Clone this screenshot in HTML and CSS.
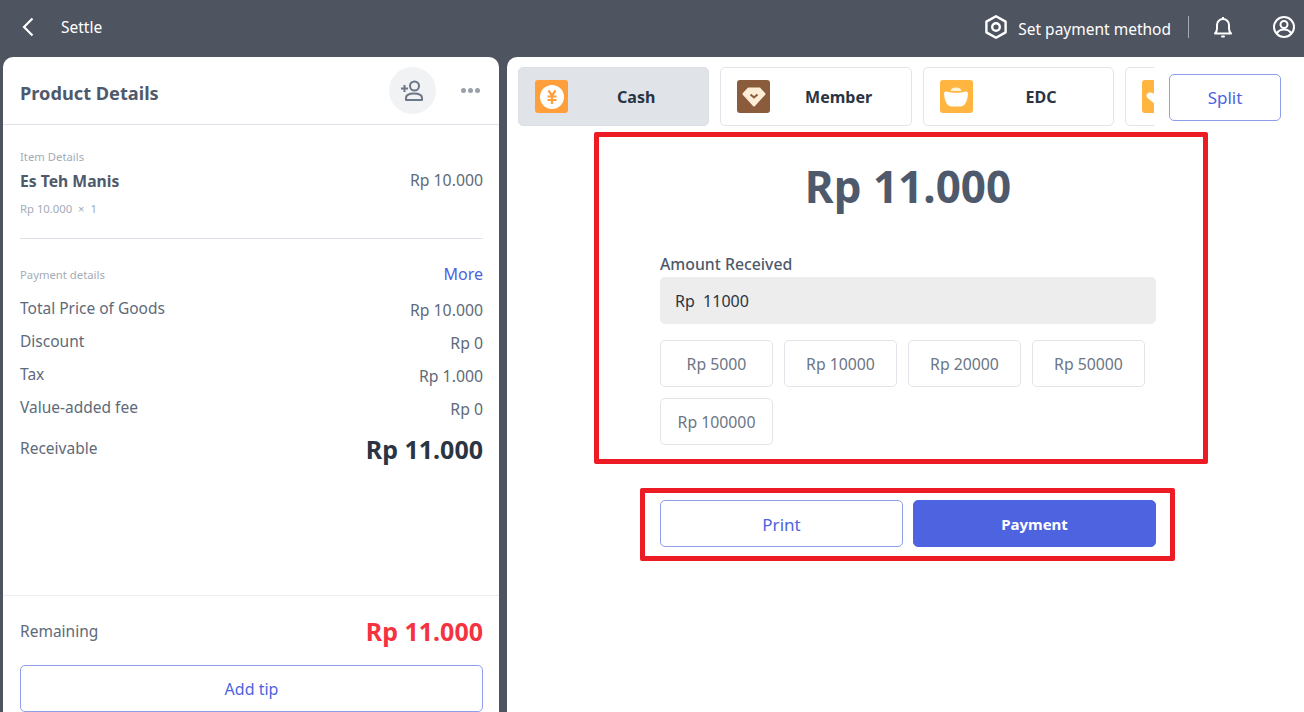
FILE: index.html
```html
<!DOCTYPE html>
<html lang="en">
<head>
    <meta charset="UTF-8">
    <meta name="viewport" content="width=device-width, initial-scale=1.0">
    <title>Settle</title>
    <link rel="stylesheet" href="styles.css">
</head>
<body>
    <header class="topbar">
        <div class="topbar-left">
            <svg class="back-icon" width="14" height="22" viewBox="0 0 14 22"><path d="M11.5 2.5 3 11l8.5 8.5" fill="none" stroke="#fff" stroke-width="2.2"/></svg>
            <span class="topbar-title">Settle</span>
        </div>
        <div class="topbar-right">
            <svg width="24" height="26" viewBox="0 0 24 26"><path d="M12 2.200 21.600 7.600v10.800L12 23.800 2.400 18.400V7.600z" fill="none" stroke="#fff" stroke-width="2.400" stroke-linejoin="round"/><circle cx="12" cy="13" r="3.800" fill="none" stroke="#fff" stroke-width="2.400"/></svg>
            <span class="set-method">Set payment method</span>
            <span class="topbar-sep"></span>
            <svg class="bell" width="20" height="24" viewBox="0 0 20 24"><path d="M2 18.500c1.500-1.500 2-2.500 2-5V10a6 6 0 0 1 12 0v3.500c0 2.500.5 3.500 2 5z" fill="none" stroke="#fff" stroke-width="2" stroke-linejoin="round"/><path d="M10 2v2" stroke="#fff" stroke-width="2"/><rect x="8" y="20.500" width="4" height="2" rx="1" fill="#fff"/></svg>
            <svg class="user" width="24" height="24" viewBox="0 0 24 24"><circle cx="12" cy="12" r="10" fill="none" stroke="#fff" stroke-width="2"/><circle cx="12" cy="9.500" r="3.500" fill="none" stroke="#fff" stroke-width="2"/><path d="M4.800 18.500c1.500-3 4-4 7.200-4s5.700 1 7.200 4" fill="none" stroke="#fff" stroke-width="2"/></svg>
        </div>
    </header>

    <main class="content">
        <section class="details">
            <div class="details-head">
                <h2>Product Details</h2>
                <div class="details-actions">
                    <span class="add-member">
                        <svg width="24" height="24" viewBox="0 0 24 24"><circle cx="13.500" cy="7" r="4.500" fill="none" stroke="#6b7686" stroke-width="2"/><path d="M5 21v-2c0-3 2.500-4.500 8-4.500s8 1.500 8 4.500v2z" fill="none" stroke="#6b7686" stroke-width="2" stroke-linejoin="round"/><path d="M0 9.500h7M3.500 6v7" stroke="#6b7686" stroke-width="2"/></svg>
                    </span>
                    <span class="dots"><i></i><i></i><i></i></span>
                </div>
            </div>

            <div class="details-body">
                <div class="small-label">Item Details</div>
                <div class="item-row">
                    <span class="item-name">Es Teh Manis</span>
                    <span class="price">Rp 10.000</span>
                </div>
                <div class="small-label item-qty">Rp 10.000 &nbsp;× &nbsp;1</div>

                <hr class="divider">

                <div class="pay-head">
                    <span class="small-label">Payment details</span>
                    <span class="more">More</span>
                </div>
                <div class="row"><span>Total Price of Goods</span><span class="price">Rp 10.000</span></div>
                <div class="row"><span>Discount</span><span class="price">Rp 0</span></div>
                <div class="row"><span>Tax</span><span class="price">Rp 1.000</span></div>
                <div class="row"><span>Value-added fee</span><span class="price">Rp 0</span></div>
                <div class="row total receivable"><span>Receivable</span><strong>Rp 11.000</strong></div>
            </div>

            <div class="details-foot">
                <div class="row total remaining"><span>Remaining</span><strong>Rp 11.000</strong></div>
                <button class="btn-outline tip">Add tip</button>
            </div>
        </section>

        <section class="payment">
            <div class="tabs-row">
                <div class="tabs">
                    <div class="tab active">
                        <span class="tab-icon cash"><svg width="24" height="24" viewBox="0 0 24 24"><circle cx="12" cy="12" r="12" fill="#fff"/><path d="M8.500 5.500l3.500 5 3.500-5M7.500 11.500h9M7.500 15h9M12 10.500V19" fill="none" stroke="#ff9f3c" stroke-width="2.200"/></svg></span>
                        <span class="tab-name">Cash</span>
                    </div>
                    <div class="tab">
                        <span class="tab-icon member"><svg width="24" height="20" viewBox="0 0 24 20"><path d="M6.500 1.500h11L22.500 7 12 18.500 1.500 7z" fill="#fdeed8" stroke="#fdeed8" stroke-width="2" stroke-linejoin="round"/><path d="M8.500 7.500l3.500 3 3.500-3" fill="none" stroke="#8a5c3c" stroke-width="2"/></svg></span>
                        <span class="tab-name">Member</span>
                    </div>
                    <div class="tab">
                        <span class="tab-icon edc"><svg width="26" height="20" viewBox="0 0 26 20"><path d="M7.500 4C8 1.500 10 .5 13 .5s5 1 5.500 3.500z" fill="#fff3dc"/><path d="M1 7c0-2 1-2.500 3-2.500 3 1.800 15 1.800 18 0 2 0 3 .5 3 2.500-.5 7-3.500 12.500-7.500 12.500h-9C4.500 19.500 1.500 14 1 7z" fill="#fff"/></svg></span>
                        <span class="tab-name">EDC</span>
                    </div>
                    <div class="tab">
                        <span class="tab-icon edc"><svg width="33" height="33" viewBox="0 0 33 33"><path d="M16.500 27 5.500 18c-2.500-2.500-.5-5.500 2.500-5.500 3.500 0 6 2.500 8.500 5 2.500-2.500 5-5 8.500-5 3 0 5 3 2.500 5.500z" fill="#fff"/></svg></span>
                    </div>
                </div>
                <button class="btn-outline split">Split</button>
            </div>

            <div class="mark amount-box">
                <div class="amount">Rp 11.000</div>
                <label class="amount-label">Amount Received</label>
                <div class="amount-input">Rp &nbsp;11000</div>
                <div class="chips">
                    <button class="chip">Rp 5000</button>
                    <button class="chip">Rp 10000</button>
                    <button class="chip">Rp 20000</button>
                    <button class="chip">Rp 50000</button>
                    <button class="chip">Rp 100000</button>
                </div>
            </div>

            <div class="mark action-box">
                <button class="btn-outline action">Print</button>
                <button class="btn-primary action">Payment</button>
            </div>
        </section>
    </main>
</body>
</html>
```

FILE: styles.css
```css
* {
    box-sizing: border-box;
}
html, body {
    height: 100%;
}
body {
    margin: 0;
    overflow: hidden;
    display: flex;
    flex-direction: column;
    background: #4e5460;
    color: #4e5a6b;
    font-family: "Noto Sans", "Noto Sans CJK SC", sans-serif;
    font-size: 15.5px;
}
button {
    font-family: inherit;
    cursor: pointer;
}

.topbar {
    height: 57px;
    flex: none;
    display: flex;
    justify-content: space-between;
    align-items: center;
    padding: 0 8px 3px 21px;
    color: #fff;
}
.topbar-left, .topbar-right {
    display: flex;
    align-items: center;
}
.topbar-title {
    margin-left: 26px;
    font-size: 15.5px;
}
.set-method {
    margin: 4px 0 0 10px;
    font-size: 15.5px;
}
.topbar-sep {
    width: 1px;
    height: 22px;
    margin: 0 24px 0 17px;
    background: #a5a9b0;
}
.user {
    margin-left: 39px;
}

.content {
    flex: 1;
    min-height: 0;
    display: flex;
    gap: 8px;
    padding-left: 3px;
}

.details {
    width: 496px;
    flex: none;
    display: flex;
    flex-direction: column;
    background: #fff;
    border-radius: 10px 10px 0 0;
}
.details-head {
    height: 68px;
    flex: none;
    display: flex;
    justify-content: space-between;
    align-items: center;
    padding: 0 19px 0 17px;
    border-bottom: 1px solid #dfe1e8;
}
.details-head h2 {
    margin: 4px 0 0;
    font-size: 18.2px;
    font-weight: 700;
    color: #4e5a6b;
}
.details-actions {
    display: flex;
    align-items: center;
    gap: 25px;
}
.add-member {
    width: 47px;
    height: 47px;
    display: flex;
    align-items: center;
    justify-content: center;
    border-radius: 50%;
    background: #f0f2f4;
}
.dots {
    display: flex;
    gap: 2px;
}
.dots i {
    width: 5px;
    height: 5px;
    border-radius: 50%;
    background: #9aa0aa;
}

.details-body {
    flex: 1;
    padding: 24px 16px 0 17px;
}
.small-label {
    font-size: 11.3px;
    line-height: 16px;
    color: #a4acb8;
}
.item-row, .row, .pay-head {
    display: flex;
    justify-content: space-between;
}
.item-row {
    align-items: center;
    height: 24px;
    margin-top: 4px;
}
.item-name {
    font-size: 15.7px;
    font-weight: 700;
    color: #4e5a6b;
}
.price {
    font-size: 15.8px;
    color: #5e6a7a;
}
.item-row .price {
    margin-bottom: 2px;
}
.row .price {
    margin-top: 4px;
}
.item-qty {
    margin-top: 8px;
}
.divider {
    margin: 21px 0 0;
    border: 0;
    border-top: 1px solid #dfe1e8;
}
.pay-head {
    align-items: center;
    height: 24px;
    margin-top: 24px;
}
.more {
    margin-bottom: 2px;
    font-size: 16px;
    color: #4d63df;
}
.row {
    height: 33px;
    align-items: center;
    color: #5e6a7a;
}
.pay-head + .row {
    margin-top: 4px;
}
.row.total {
    height: 50px;
}
.row.total strong {
    font-size: 25px;
    font-weight: 700;
    color: #2a3442;
}
.receivable strong {
    margin-top: 2px;
}

.details-foot {
    flex: none;
    padding: 10px 16px 0 17px;
    border-top: 1px solid #ebedf0;
}
.remaining {
    margin-bottom: 9px;
}
.row.remaining strong {
    color: #f5333f;
}
.tip {
    width: 100%;
    height: 47px;
}

.btn-outline {
    background: #fff;
    border: 1px solid #8f9ee8;
    border-radius: 5px;
    color: #4d63df;
    font-size: 16px;
}
.btn-primary {
    background: #4d63df;
    border: 1px solid #4d63df;
    border-radius: 5px;
    color: #fff;
    font-size: 15px;
    font-weight: 700;
}

.payment {
    flex: 1;
    min-width: 0;
    display: flex;
    flex-direction: column;
    align-items: flex-start;
    background: #fff;
    border-radius: 10px 0 0 0;
}
.tabs-row {
    display: flex;
    width: 100%;
    padding: 10px 23px 0 11px;
    justify-content: space-between;
    align-items: flex-start;
}
.tabs {
    width: 636px;
    display: flex;
    gap: 11px;
    overflow: hidden;
}
.tab {
    width: 191.400px;
    height: 59px;
    flex: none;
    display: flex;
    align-items: center;
    padding-left: 16px;
    border: 1px solid #e2e4e9;
    border-radius: 5px;
}
.tab.active {
    background: #e0e3e8;
    border-color: #dcdfe5;
}
.tab-icon {
    width: 33px;
    height: 33px;
    flex: none;
    display: flex;
    align-items: center;
    justify-content: center;
    border-radius: 3px;
}
.cash {
    background: #ff9f3c;
}
.member {
    background: #8a5c3c;
}
.edc {
    background: #ffb540;
}
.tab-name {
    flex: 1;
    padding-right: 4px;
    text-align: center;
    font-size: 16px;
    font-weight: 700;
    color: #2a3442;
}
.split {
    width: 112px;
    height: 47px;
    margin-top: 7px;
    font-size: 17px;
}

.mark {
    border: 5px solid #ed1c24;
    border-radius: 2px;
}
.amount-box {
    width: 614px;
    height: 332px;
    margin: 6px 0 0 87px;
    padding: 19px 47px 0 61px;
}
.amount {
    text-align: center;
    font-size: 44px;
    font-weight: 700;
    line-height: 60px;
    color: #4e5a6b;
}
.amount-label {
    display: block;
    margin-top: 37px;
    font-size: 15.8px;
    font-weight: 500;
    line-height: 22px;
    color: #4e5a6b;
}
.amount-input {
    height: 47px;
    margin-top: 2px;
    padding-left: 15px;
    display: flex;
    align-items: center;
    background: #ededed;
    border-radius: 5px;
    color: #2a3442;
    font-size: 16px;
}
.chips {
    display: flex;
    flex-wrap: wrap;
    gap: 11px;
    margin-top: 16px;
}
.chip {
    width: 113px;
    height: 47px;
    padding: 0;
    background: #fff;
    border: 1px solid #e2e4e9;
    border-radius: 5px;
    color: #6b7686;
    font-size: 15.8px;
}
.action-box {
    width: 535px;
    height: 73px;
    margin: 24px 0 0 133px;
    padding: 7px 14px 0 15px;
    display: flex;
    gap: 10px;
}
.action {
    flex: 1;
    height: 47px;
}
.btn-outline.action {
    padding-top: 3px;
    font-size: 17px;
}
```
